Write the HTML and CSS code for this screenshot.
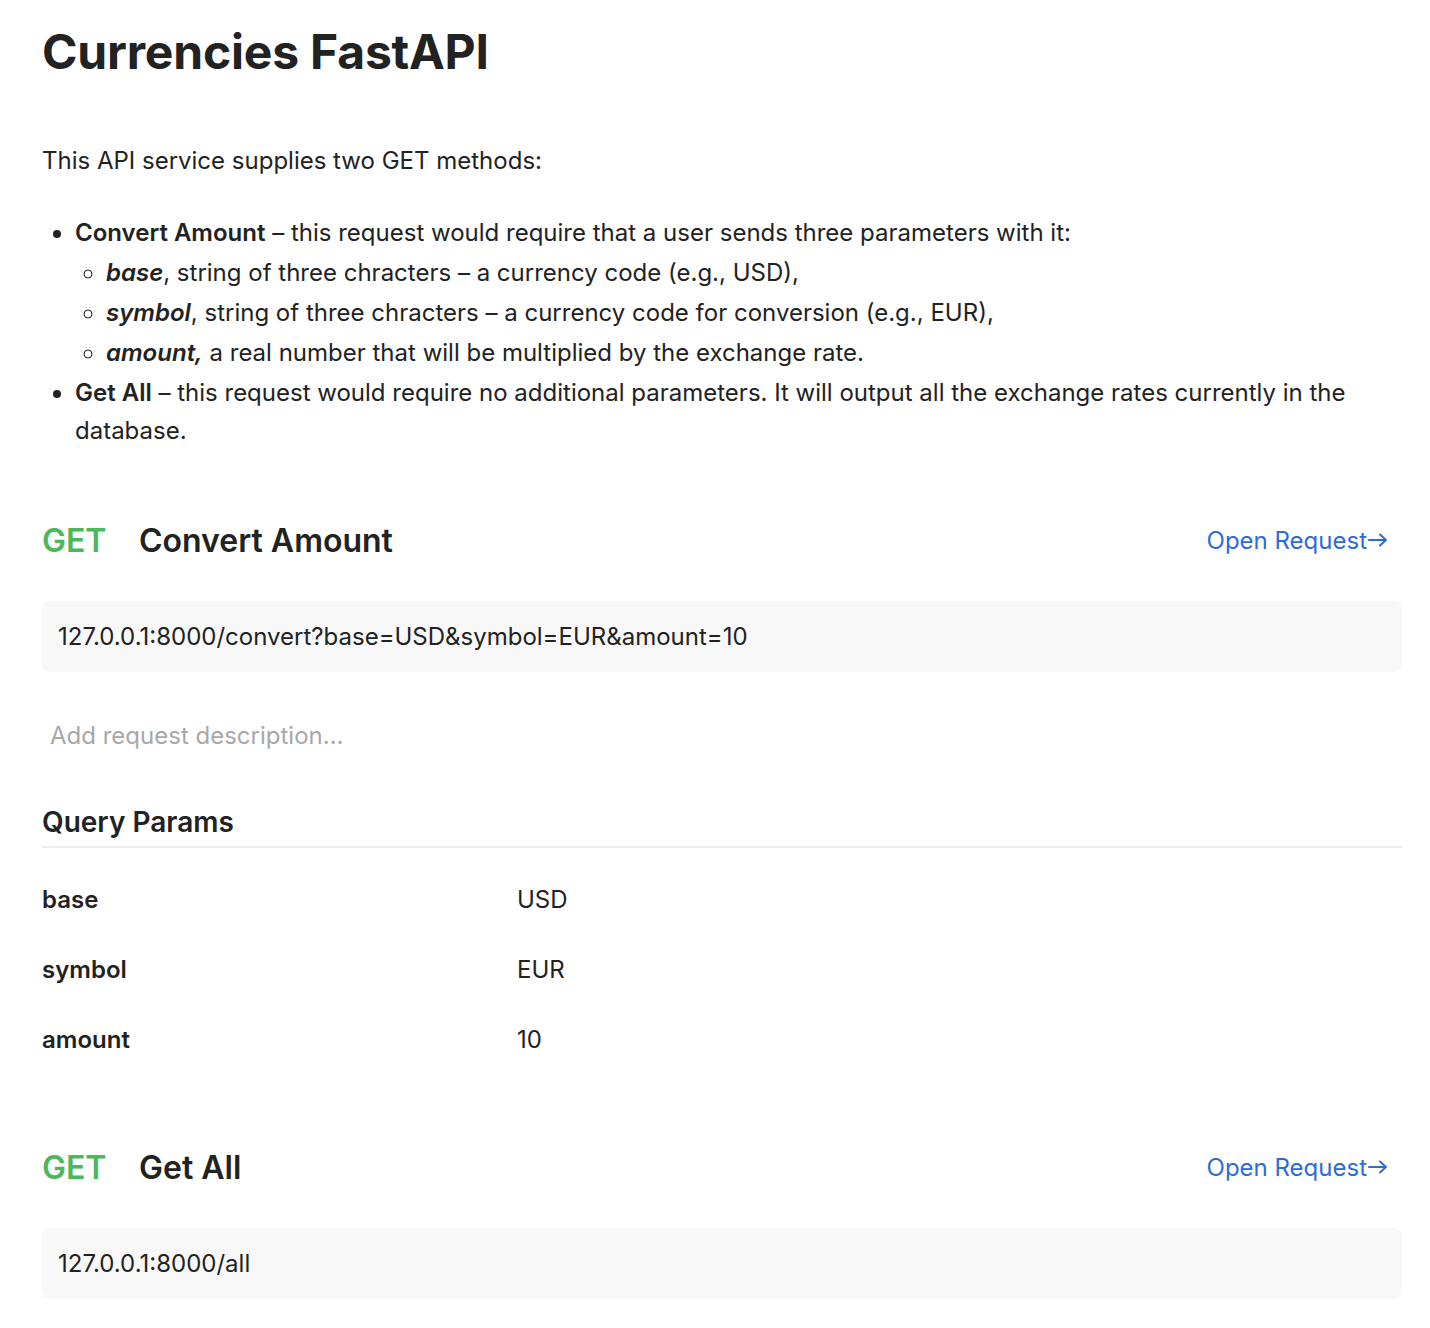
FILE: index.html
```html
<!DOCTYPE html>
<html>
<head>
<meta charset="utf-8">
<link rel="stylesheet" href="styles.css">
</head>
<body>
<main class="doc">
  <h1 class="title">Currencies FastAPI</h1>
  <p class="intro">This API service supplies two GET methods:</p>
  <ul class="methods">
    <li><strong>Convert Amount</strong> – this request would require that a user sends three parameters with it:
      <ul class="sub">
        <li><strong><em>base</em></strong>, string of three chracters – a currency code (e.g., USD),</li>
        <li><strong><em>symbol</em></strong>, string of three chracters – a currency code for conversion (e.g., EUR),</li>
        <li><strong><em>amount,</em></strong> a real number that will be multiplied by the exchange rate.</li>
      </ul>
    </li>
    <li><strong>Get All</strong> – this request would require no additional parameters. It will output all the exchange rates currently in the database.</li>
  </ul>

  <section class="request">
    <div class="req-head">
      <div class="req-name"><span class="method">GET</span><span class="name">Convert Amount</span></div>
      <a class="open" href="#">Open Request<svg class="arrow" width="20" height="14" viewBox="0 0 20 14"><path d="M1 7H18M12 1.5L18 7L12 12.5" fill="none" stroke="currentColor" stroke-width="2" stroke-linecap="round" stroke-linejoin="round"/></svg></a>
    </div>
    <div class="url">127.0.0.1:8000/convert?base=USD&amp;symbol=EUR&amp;amount=10</div>
    <div class="desc">Add request description…</div>
    <h3 class="params-title">Query Params</h3>
    <div class="params">
      <div class="row"><span class="key">base</span><span class="val">USD</span></div>
      <div class="row"><span class="key">symbol</span><span class="val">EUR</span></div>
      <div class="row"><span class="key">amount</span><span class="val">10</span></div>
    </div>
  </section>

  <section class="request">
    <div class="req-head">
      <div class="req-name"><span class="method">GET</span><span class="name">Get All</span></div>
      <a class="open" href="#">Open Request<svg class="arrow" width="20" height="14" viewBox="0 0 20 14"><path d="M1 7H18M12 1.5L18 7L12 12.5" fill="none" stroke="currentColor" stroke-width="2" stroke-linecap="round" stroke-linejoin="round"/></svg></a>
    </div>
    <div class="url">127.0.0.1:8000/all</div>
  </section>
</main>
</body>
</html>
```

FILE: styles.css
```css
* { box-sizing: border-box; }
html, body { margin: 0; padding: 0; background: #fff; }
body {
  font-family: Inter, "Noto Sans", sans-serif;
  color: #222;
  font-size: 24px;
}
.doc {
  width: 1360px;
  margin-left: 42px;
  padding-bottom: 30px;
}
.title {
  font-size: 48px;
  font-weight: 700;
  line-height: 60px;
  margin: 22px 0 0;
  letter-spacing: -0.2px;
}
.intro {
  margin: 60px 0 0;
  line-height: 38px;
}
.methods {
  margin: 34px 0 0;
  padding-left: 33px;
  line-height: 38px;
}
.methods li { margin-top: 2px; }
.methods strong { font-weight: 600; }
.sub {
  margin: 0;
  padding-left: 31px;
  list-style: circle;
}
.request { margin-top: 70px; }
.request + .request { margin-top: 73px; }
.req-head {
  display: flex;
  justify-content: space-between;
  align-items: center;
  height: 40px;
}
.req-name { display: flex; align-items: center; }
.method {
  color: #4cb85c;
  font-size: 32px;
  font-weight: 600;
  width: 97px;
}
.name {
  font-size: 32px;
  font-weight: 600;
}
.open {
  color: #2e6bd4;
  text-decoration: none;
  font-size: 24px;
  display: flex;
  align-items: center;
  margin-right: 14px;
}
.arrow { margin-left: 1px; }
.url {
  margin-top: 41px;
  background: #f8f8f8;
  border-radius: 8px;
  height: 71px;
  display: flex;
  align-items: center;
  padding-left: 16px;
}
.desc {
  margin-top: 45px;
  padding-left: 8px;
  color: #a8a8a8;
  line-height: 38px;
}
.params-title {
  margin: 49px 0 0;
  font-size: 28px;
  font-weight: 600;
  line-height: 36px;
  padding-bottom: 6px;
  border-bottom: 2px solid #ececec;
}
.params { margin-top: 16px; }
.row {
  display: grid;
  grid-template-columns: 475px 1fr;
  height: 70px;
  align-items: center;
}
.key { font-weight: 600; }
```
